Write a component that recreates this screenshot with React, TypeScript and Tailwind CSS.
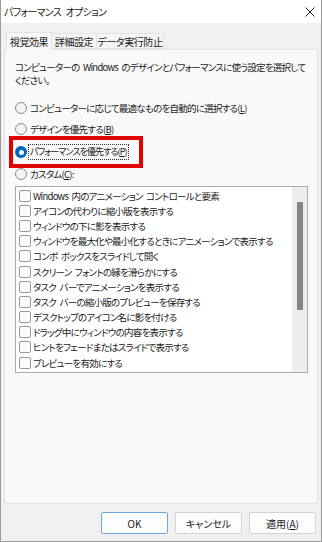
import React from "react";

const jp = "font-['Yu_Gothic_UI','Noto_Sans_CJK_JP',sans-serif] [font-feature-settings:'palt']";

const Radio = ({ label, acc, checked, focus }: any) => {
  return (
    <div className="flex items-center h-[21px]">
      {checked ? (
        <span className="w-[12px] h-[12px] rounded-full bg-[#0067c0] flex items-center justify-center shrink-0">
          <span className="w-[5px] h-[5px] rounded-full bg-white"></span>
        </span>
      ) : (
        <span className="w-[12px] h-[12px] rounded-full border border-[#8c8c8c] bg-[#f3f3f3] shrink-0"></span>
      )}
      <span
        className={
          "ml-[2px] px-[1px] leading-[14px] whitespace-nowrap " +
          (focus ? "outline outline-1 outline-dotted outline-[#333] text-[9px] tracking-[-0.9px]" : "")
        }
      >
        {label}(<u>{acc}</u>){acc === "C" ? ":" : ""}
      </span>
    </div>
  );
};

const Check = ({ label }: any) => {
  return (
    <div className="flex items-center h-[15.2px]">
      <span className="w-[12px] h-[12px] rounded-[2px] border border-[#9a9a9a] bg-[#fbfbfb] shrink-0"></span>
      <span className="ml-[2px] leading-[14px] whitespace-nowrap">{label}</span>
    </div>
  );
};

const items = [
  "Windows 内のアニメーション コントロールと要素",
  "アイコンの代わりに縮小版を表示する",
  "ウィンドウの下に影を表示する",
  "ウィンドウを最大化や最小化するときにアニメーションで表示する",
  "コンボ ボックスをスライドして開く",
  "スクリーン フォントの縁を滑らかにする",
  "タスク バーでアニメーションを表示する",
  "タスク バーの縮小版のプレビューを保存する",
  "デスクトップのアイコン名に影を付ける",
  "ドラッグ中にウィンドウの内容を表示する",
  "ヒントをフェードまたはスライドで表示する",
  "プレビューを有効にする",
];

const App = () => {
  return (
    <main
      className={
        "w-[322px] h-[542px] bg-[#f0f0f0] border border-t-0 border-[#9c9c9c] flex flex-col text-[10px] text-[#1a1a1a] overflow-hidden " +
        jp
      }
    >
      <div className="h-[23px] bg-white flex items-center justify-between pl-[3px] pr-[6px] shrink-0">
        <span className="text-[10px] tracking-[-0.7px] [word-spacing:3px]">パフォーマンス オプション</span>
        <svg width="10" height="10" viewBox="0 0 10 10" className="mt-[1px]">
          <path d="M0.5 0.5 L9.5 9.5 M9.5 0.5 L0.5 9.5" stroke="#222" strokeWidth="1" />
        </svg>
      </div>

      <div className="flex items-end pl-[5px] mt-[8px] h-[18px] shrink-0 tracking-[-0.4px]">
        <div className="h-[18px] w-[46px] bg-[#f9f9f9] border border-b-0 border-[#e3e3e3] flex items-center justify-center relative z-10 -mb-[1px]">
          視覚効果
        </div>
        <div className="h-[16px] w-[45px] bg-[#f4f4f4] border border-l-0 border-[#e3e3e3] flex items-center justify-center">
          詳細設定
        </div>
        <div className="h-[16px] w-[67px] bg-[#f4f4f4] border border-l-0 border-[#e3e3e3] flex items-center justify-center">
          データ実行防止
        </div>
      </div>

      <section className="mx-[3px] h-[455px] bg-[#f9f9f9] border border-[#e3e3e3] shrink-0 pl-[10px] pr-[9px] pt-[11px] text-[9.5px] tracking-[-0.75px]">
        <p className="leading-[13px] [word-spacing:2px]">
          コンピューターの Windows のデザインとパフォーマンスに使う設定を選択して
          <br />
          ください。
        </p>
        <div className="mt-[10px] flex flex-col">
          <Radio label="コンピューターに応じて最適なものを自動的に選択する" acc="L" />
          <Radio label="デザインを優先する" acc="B" />
          <div className="-ml-[6px] w-[134px] h-[32px] border-[4px] border-[#e00000] flex items-center pl-[2px] mt-[-3px] mb-[-5px]">
            <Radio label="パフォーマンスを優先する" acc="P" checked focus />
          </div>
          <Radio label="カスタム" acc="C" />
        </div>
        <div className="mt-[2px] h-[187px] bg-white border border-[#ababab] flex">
          <div className="flex-1 pl-[3px] pt-[1px] overflow-hidden [word-spacing:2px]">
            {items.map((t) => (
              <Check key={t} label={t} />
            ))}
          </div>
          <div className="w-[15px] bg-[#ededed] flex justify-center pt-[15px]">
            <div className="w-[6px] h-[108px] bg-[#858585]"></div>
          </div>
        </div>
      </section>

      <div className="flex justify-end gap-[7px] pr-[5px] pt-[8px]">
        <button className="w-[67px] h-[22px] bg-[#fdfdfd] border border-[#6da7dd] rounded-[2px]">OK</button>
        <button className="w-[67px] h-[22px] bg-[#fdfdfd] border border-[#d3d3d3] rounded-[2px]">キャンセル</button>
        <button className="w-[67px] h-[22px] bg-[#fdfdfd] border border-[#d3d3d3] rounded-[2px]">
          適用(<u>A</u>)
        </button>
      </div>
    </main>
  );
};

export default App;
